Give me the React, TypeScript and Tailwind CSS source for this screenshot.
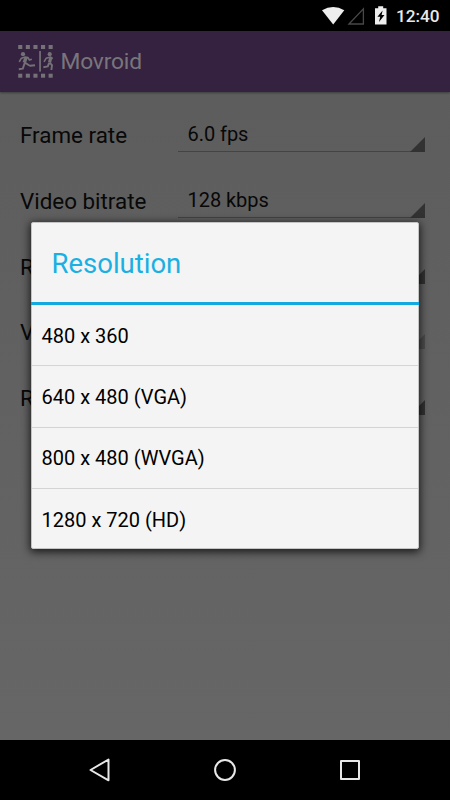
import React from 'react';

interface Setting {
  label: string;
  value: string;
  disabled?: boolean;
}

const settings: Setting[] = [
  { label: 'Frame rate', value: '6.0 fps' },
  { label: 'Video bitrate', value: '128 kbps' },
  { label: 'R', value: '' },
  { label: 'V', value: '', disabled: true },
  { label: 'R', value: '' },
];

const resolutions = ['480 x 360', '640 x 480 (VGA)', '800 x 480 (WVGA)', '1280 x 720 (HD)'];

const StatusBar: React.FC = () => (
  <div className="flex h-[31px] shrink-0 justify-end bg-black">
    <svg className="h-[31px] w-[70px]" viewBox="320 0 70 31">
      <path d="M322 10.2 Q333.2 3.6 344.3 10.2 L333.2 24.4 Z" fill="#eeeeee" />
      <path d="M349 24 L363.4 8.8 V24 Z" fill="none" stroke="#484848" strokeWidth="1.3" />
      <path d="M375 8.2 h3.2 v-2 h5 v2 h3.3 v16.4 h-11.5 z" fill="#eeeeee" />
      <path d="M382.6 10.5 l-5.2 6.3 h2.8 l-1.2 5.3 5.5-7.1 h-2.9 z" fill="#000" />
    </svg>
    <span className="w-[60px] pl-[6px] pt-[4px] text-[17.2px] leading-[24px] font-medium text-[#e9e9e9]">12:40</span>
  </div>
);

const LogoIcon: React.FC = () => (
  <svg className="h-[36px] w-[37px]" viewBox="17 43 37 36" fill="#747276">
    {[18.2, 25.8, 33.4, 41, 48.6].map((x) => (
      <React.Fragment key={x}>
        <rect x={x} y="45" width="4.1" height="4" />
        <rect x={x} y="73.7" width="4.1" height="4" />
      </React.Fragment>
    ))}
    <rect x="39.2" y="51" width="1.7" height="20.6" />
    <circle cx="23" cy="54.2" r="2.1" />
    <circle cx="49.7" cy="54.2" r="2.1" />
    <g fill="none" stroke="#747276" strokeLinejoin="round">
      <path d="M19.2 61.8 L21.4 58.2 L25.3 57 L28 57.6 L29.4 60 L31.8 59.2" strokeWidth="1.6" />
      <path d="M26.2 57.4 L24.2 62.6" strokeWidth="3.4" />
      <path d="M24.4 62.2 L28.6 65 L30 65.8 L35 65.2 M24.6 63.4 L22.8 68.6 L18.8 69.2" strokeWidth="1.9" />
      <path d="M44 61.8 L46.2 58.2 L50.4 57 L52.7 58.6" strokeWidth="1.6" />
      <path d="M50.9 57.4 L49.5 62.6" strokeWidth="3.2" />
      <path d="M49.6 62.6 L52 65.2 L51.4 70 M49 63.2 L47.8 66.4 L43.4 67.2" strokeWidth="1.9" />
    </g>
  </svg>
);

const ActionBar: React.FC = () => (
  <header className="z-10 flex h-[60.5px] shrink-0 items-center bg-[#352240] pl-[17px] shadow-[0_1px_2px_rgba(0,0,0,0.35)]">
    <LogoIcon />
    <h1 className="pt-[2px] pl-[6.5px] text-[22.8px] leading-[28px] tracking-[-0.2px] text-[#79757c]">Movroid</h1>
  </header>
);

const SettingRow: React.FC<{ setting: Setting }> = ({ setting }) => (
  <div className="flex h-[65.75px] items-start">
    <span className="w-[158px] pt-[12px] text-[22.4px] leading-[28px] text-[#080808]">{setting.label}</span>
    <div className="relative h-[43px] flex-1 border-b border-[#444] pl-[9.5px] pt-[11.4px] text-[20px] leading-[28px] tracking-[-0.05px] text-[#080808]">
      {setting.value}
      <svg
        className={`absolute right-0 -bottom-px h-[15px] w-[15px] ${setting.disabled ? 'text-[#4d4d4d]' : 'text-[#323232]'}`}
        viewBox="0 0 15 15"
      >
        <path d="M15 0 V15 H0 Z" fill="currentColor" />
      </svg>
    </div>
  </div>
);

const ResolutionDialog: React.FC = () => (
  <div
    role="dialog"
    className="absolute top-[222px] left-[31px] z-20 h-[327px] w-[388px] rounded-[2px] border border-[#c4c4c4] bg-[#f4f4f4] shadow-[0_2px_9px_1px_rgba(0,0,0,0.75)]"
  >
    <h2 className="-mx-px h-[82px] border-b-3 border-[#12a9df] pl-[20.5px] pt-[24px] text-[27.5px] leading-[34px] text-[#1bb0e2]">
      Resolution
    </h2>
    <ul>
      {resolutions.map((item) => (
        <li
          key={item}
          className="flex h-[61.3px] items-center border-b border-[#d4d4d4] pt-[1.5px] pl-[9.5px] text-[20px] text-black last:border-b-0 last:pt-0"
        >
          {item}
        </li>
      ))}
    </ul>
  </div>
);

const NavigationBar: React.FC = () => (
  <nav className="flex h-[60px] shrink-0 items-center justify-center gap-[101px] bg-black text-[#e8e8e8]">
    <svg className="h-6 w-6" viewBox="0 0 24 24" fill="none" stroke="currentColor" strokeWidth="2" strokeLinejoin="round">
      <path d="M20.5 1.5 V22.3 L2.5 12 Z" />
    </svg>
    <svg className="h-6 w-6" viewBox="0 0 24 24" fill="none" stroke="currentColor" strokeWidth="2">
      <circle cx="12" cy="12" r="9.9" />
    </svg>
    <svg className="h-6 w-6" viewBox="0 0 24 24" fill="none" stroke="currentColor" strokeWidth="2" strokeLinejoin="round">
      <rect x="3" y="3" width="18" height="18" />
    </svg>
  </nav>
);

const App: React.FC = () => (
  <div className="relative flex h-[800px] w-[450px] flex-col overflow-hidden font-['Roboto',sans-serif]">
    <StatusBar />
    <ActionBar />
    <main className="flex-1 bg-linear-to-b from-[#5d5d5d] to-[#666666] pt-[17.5px] pr-[25px] pl-[20px]">
      {settings.map((setting, index) => (
        <SettingRow key={index} setting={setting} />
      ))}
    </main>
    <NavigationBar />
    <ResolutionDialog />
  </div>
);

export default App;
